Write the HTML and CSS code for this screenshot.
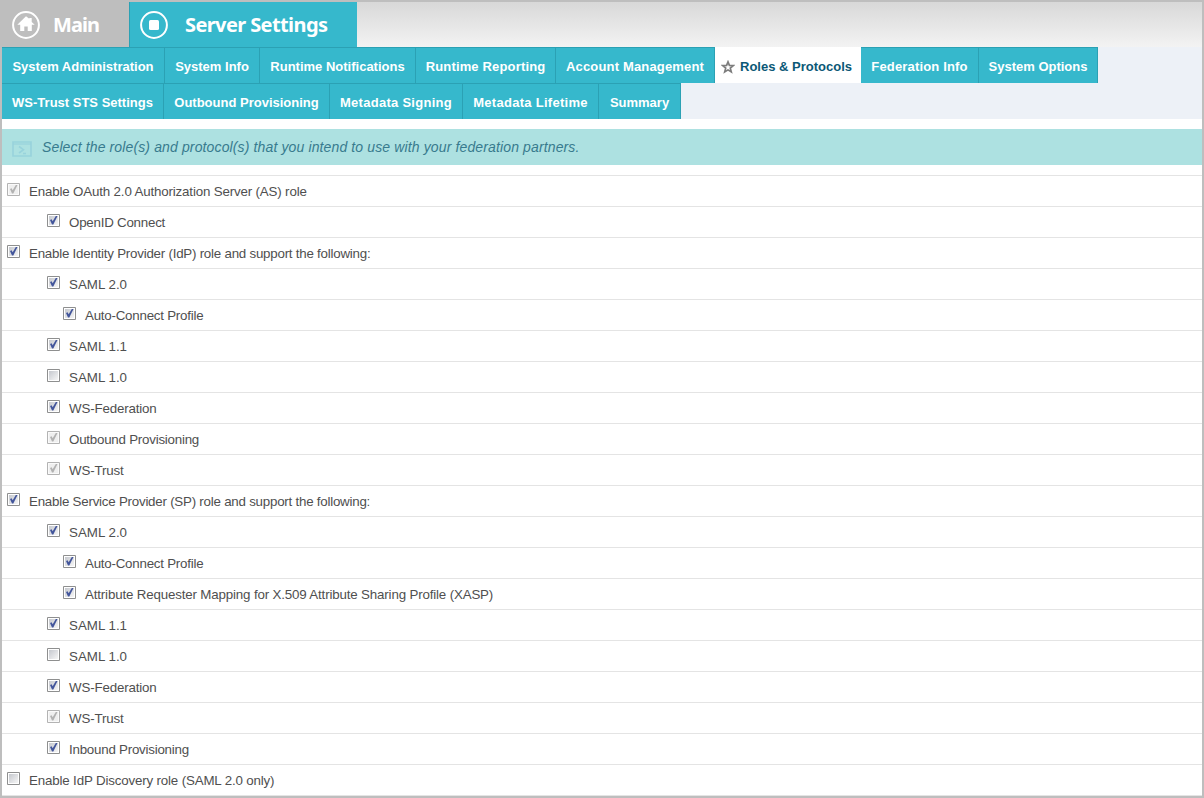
FILE: index.html
```html
<!DOCTYPE html>
<html lang="en">
<head>
<meta charset="utf-8">
<title>Server Settings</title>
<link rel="stylesheet" href="styles.css">
</head>
<body>
<svg class="defs" width="0" height="0">
  <defs>
    <linearGradient id="face" x1="0" y1="0" x2="1" y2="1"><stop offset="0" stop-color="#c5c8ce"/><stop offset="1" stop-color="#f6f6f6"/></linearGradient>
    <symbol id="off" viewBox="0 0 13 13"><path fill="#fff" stroke="#8e8f8f" d="M.5.5h12v12H.5z"/><path fill="url(#face)" d="M2 2h9v9H2z"/></symbol>
    <symbol id="on" viewBox="0 0 13 13"><path fill="#fff" stroke="#8e8f8f" d="M.5.5h12v12H.5z"/><path fill="url(#face)" d="M2 2h9v9H2z"/><path fill="#42559b" d="M3 6 4.6 5.2 5.7 7.3 8.8 2 10.5 2 6.3 10.6H5z"/></symbol>
    <symbol id="locked" viewBox="0 0 13 13"><path fill="#fafafa" stroke="#b3b3b3" d="M.5.5h12v12H.5z"/><path fill="#efefef" d="M2 2h9v9H2z"/><path fill="#b2b2b2" d="M3 6 4.6 5.2 5.7 7.3 8.8 2 10.5 2 6.3 10.6H5z"/></symbol>
  </defs>
</svg>
<div class="window">
  <header class="top">
    <div class="crumb home">
      <svg class="badge" viewBox="0 0 28 28"><circle cx="14" cy="14" r="12.9" fill="none" stroke="#fff" stroke-width="2"/><path fill="#fff" d="M14 5.3 5.3 13.8h2.9v6.2h4.1v-4.5h3.4v4.5h4.1v-6.2h2.9l-3-2.9V6.9h-2.4v.8z"/></svg>
      <span class="home-name">Main</span>
    </div>
    <div class="crumb current">
      <svg class="badge" viewBox="0 0 28 28"><circle cx="14" cy="14" r="12.9" fill="none" stroke="#fff" stroke-width="2"/><rect x="9" y="9" width="10" height="10" rx="1.5" fill="#fff"/></svg>
      <span class="current-name">Server Settings</span>
    </div>
  </header>
  <nav class="tabs">
    <div class="tab-row first">
      <a class="tab">System Administration</a><a class="tab">System Info</a><a class="tab">Runtime Notifications</a><a class="tab loose">Runtime Reporting</a><a class="tab loose">Account Management</a><a class="tab active"><svg class="star" viewBox="0 0 14 14"><path fill="#fff" stroke="#7d7d7d" stroke-width="1.7" d="M7 1.9 8.4 5.4l3.9.2-3 2.5 1 3.9L7 9.9 3.7 12l1-3.9-3-2.5 3.9-.2z"/></svg><span>Roles &amp; Protocols</span></a><a class="tab loose">Federation Info</a><a class="tab">System Options</a>
    </div>
    <div class="tab-row second">
      <a class="tab">WS-Trust STS Settings</a><a class="tab">Outbound Provisioning</a><a class="tab wide">Metadata Signing</a><a class="tab wide">Metadata Lifetime</a><a class="tab">Summary</a>
    </div>
  </nav>
  <div class="notice">
    <svg class="notice-icon" viewBox="0 0 20 16"><path fill="none" stroke="#98d3dc" stroke-width="1.6" d="M1 1h18v14H1z"/><path stroke="#98d3dc" stroke-width="1.2" d="M1 3h18"/><path fill="none" stroke="#98d3dc" stroke-width="1.6" d="M7 5.5l4.5 3.2L7 12M11 12.5h3"/></svg>
    <em class="notice-text">Select the role(s) and protocol(s) that you intend to use with your federation partners.</em>
  </div>
  <ul class="roles">
    <li class="role"><svg class="check"><use href="#locked"/></svg><span class="caps">Enable OAuth 2.0 Authorization Server (AS) role</span></li>
    <li class="role sub"><svg class="check"><use href="#on"/></svg><span>OpenID Connect</span></li>
    <li class="role"><svg class="check"><use href="#on"/></svg><span>Enable Identity Provider (IdP) role and support the following:</span></li>
    <li class="role sub"><svg class="check"><use href="#on"/></svg><span class="short">SAML 2.0</span></li>
    <li class="role deep"><svg class="check"><use href="#on"/></svg><span>Auto-Connect Profile</span></li>
    <li class="role sub"><svg class="check"><use href="#on"/></svg><span class="short">SAML 1.1</span></li>
    <li class="role sub"><svg class="check"><use href="#off"/></svg><span class="short">SAML 1.0</span></li>
    <li class="role sub"><svg class="check"><use href="#on"/></svg><span class="caps">WS-Federation</span></li>
    <li class="role sub"><svg class="check"><use href="#locked"/></svg><span>Outbound Provisioning</span></li>
    <li class="role sub"><svg class="check"><use href="#locked"/></svg><span class="caps">WS-Trust</span></li>
    <li class="role"><svg class="check"><use href="#on"/></svg><span>Enable Service Provider (SP) role and support the following:</span></li>
    <li class="role sub"><svg class="check"><use href="#on"/></svg><span class="short">SAML 2.0</span></li>
    <li class="role deep"><svg class="check"><use href="#on"/></svg><span>Auto-Connect Profile</span></li>
    <li class="role deep"><svg class="check"><use href="#on"/></svg><span class="caps">Attribute Requester Mapping for X.509 Attribute Sharing Profile (XASP)</span></li>
    <li class="role sub"><svg class="check"><use href="#on"/></svg><span class="short">SAML 1.1</span></li>
    <li class="role sub"><svg class="check"><use href="#off"/></svg><span class="short">SAML 1.0</span></li>
    <li class="role sub"><svg class="check"><use href="#on"/></svg><span class="caps">WS-Federation</span></li>
    <li class="role sub"><svg class="check"><use href="#locked"/></svg><span class="caps">WS-Trust</span></li>
    <li class="role sub"><svg class="check"><use href="#on"/></svg><span>Inbound Provisioning</span></li>
    <li class="role"><svg class="check"><use href="#off"/></svg><span class="caps">Enable IdP Discovery role (SAML 2.0 only)</span></li>
  </ul>
</div>
</body>
</html>
```
FILE: styles.css
```css
* { box-sizing: border-box; }
body { margin: 0; overflow: hidden; background: #fff; font-family: "Liberation Sans", Arial, sans-serif; font-size: 13px; color: #4f4f4f; }
.defs { display: block; }
.window { height: 798px; border: 2px solid #bebebe; overflow: hidden; }
.top { display: flex; height: 45px; background: linear-gradient(#d8d8d8, #f3f3f3); font: bold 20px "Noto Sans", "Open Sans", sans-serif; color: #fff; }
.crumb { display: flex; align-items: center; padding-left: 10px; }
.home { width: 127px; background: #bebebe; }
.current { width: 228px; background: #36b8cc; border-left: 1px solid #2ba1b4; }
.badge { width: 28px; height: 28px; flex: none; }
.home-name { margin-left: 13px; letter-spacing: -0.9px; }
.current-name { margin-left: 17px; letter-spacing: -0.6px; }
.tabs { background: #edf1f7; }
.tab-row { display: grid; height: 36px; justify-content: start; }
.first { grid-template-columns: 163px 95px 156px 140px 159px 146px 118px 119px; }
.second { grid-template-columns: 162px 166px 133px 136px 82px; }
.tab { display: flex; align-items: center; justify-content: center; background: #36b8cc; border-top: 1px solid #2ba1b4; border-right: 1px solid #2ba1b4; color: #fff; font-weight: bold; white-space: nowrap; padding-top: 2px; }
.loose { letter-spacing: 0.16px; }
.wide { letter-spacing: 0.28px; }
.active { background: #fff; border-color: #fff; color: #0b5876; gap: 5px; padding-right: 2px; }
.star { width: 14px; height: 14px; flex: none; }
.notice { display: flex; height: 36px; margin-top: 10px; padding-left: 10px; background: #ade1e1; color: #387b8e; font-size: 14px; }
.notice-icon { width: 20px; height: 16px; margin-top: 12px; }
.notice-text { margin-left: 10px; line-height: 36px; letter-spacing: 0.13px; }
.roles { list-style: none; margin: 10px 0 0; padding: 0; border-top: 1px solid #e4e4e4; }
.role { display: flex; height: 31px; padding-left: 5px; border-bottom: 1px solid #e4e4e4; font-size: 13.33px; line-height: 31px; letter-spacing: -0.23px; white-space: nowrap; }
.role span { margin-left: 9px; }
.caps { letter-spacing: -0.16px; }
.short { letter-spacing: 0; }
.sub { padding-left: 45px; }
.deep { padding-left: 61px; }
.check { width: 13px; height: 13px; margin-top: 7px; flex: none; }
```
